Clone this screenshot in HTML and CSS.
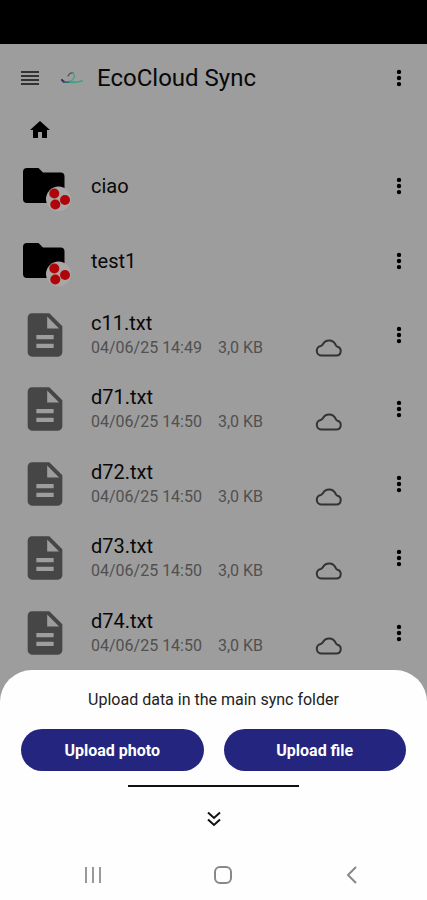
FILE: index.html
```
<!DOCTYPE html>
<html lang="en">
<head>
<meta charset="utf-8">
<meta name="viewport" content="width=device-width, initial-scale=1">
<title>EcoCloud Sync</title>
<link rel="stylesheet" href="styles.css">
</head>
<body>

<!-- shared icons -->
<svg class="defs" width="0" height="0">
  <symbol id="dots" viewBox="0 0 24 24">
    <circle cx="12" cy="5.9" r="2.2"/><circle cx="12" cy="12" r="2.2"/><circle cx="12" cy="18.1" r="2.2"/>
  </symbol>
  <symbol id="folder" viewBox="0 0 52 52">
    <path d="M8 8h11.500l4.500 4.500h17.500a4 4 0 0 1 4 4v22.500a4 4 0 0 1-4 4h-33.500a4 4 0 0 1-4-4v-27a4 4 0 0 1 4-4z"/>
    <circle cx="39.500" cy="39" r="12.500" fill="#a9a6a6"/>
    <g fill="#b00508"><circle cx="35.300" cy="33.500" r="5"/><circle cx="46" cy="40" r="5"/><circle cx="36.300" cy="44.500" r="5"/></g>
  </symbol>
  <symbol id="file" viewBox="0 0 24 24">
    <path d="M14 2H6c-1.100 0-2 .9-2 2v16c0 1.100.9 2 2 2h12c1.100 0 2-.9 2-2V8l-6-6zm2 16H8v-2h8v2zm0-4H8v-2h8v2zm-3-5V3.500L18.500 9H13z"/>
  </symbol>
  <symbol id="cloud" viewBox="0 0 28 20">
    <path d="M7 17.500h14.500a4.500 4.500 0 0 0 1-8.800c-1.500-.4-1.500-1-2-2.200a7 7 0 0 0-12.500-.5c-.6 1.200-1 1.600-2.300 2a4.800 4.800 0 0 0 1.300 9.500z" fill="none" stroke="#333" stroke-width="2"/>
  </symbol>
</svg>

<div class="statusbar"></div>

<header class="toolbar">
  <button class="icon-btn menu" aria-label="Menu">
    <svg width="20" height="16" viewBox="0 0 20 16" fill="none" stroke="#333" stroke-width="2"><path d="M1 2h18M1 6h18M1 10h18M1 14h18"/></svg>
  </button>
  <svg class="logo" width="22" height="14" viewBox="0 0 22 14" fill="none" stroke-linecap="round">
    <path d="M1 9l2 2" stroke="#29305f" stroke-width="2"/>
    <path d="M3 10.500q3 1.500 6 0" stroke="#3d6272" stroke-width="1.500"/>
    <path d="M7 5q2-4 5-3" stroke="#46545c" stroke-width="1.200"/>
    <path d="M12 2q3 3 0 6q-1 2-3 3" stroke="#4b9b8b" stroke-width="1.200"/>
    <path d="M9 11q5 1 12-1" stroke="#3aa284" stroke-width="1.800"/>
  </svg>
  <h1>EcoCloud Sync</h1>
  <button class="icon-btn" aria-label="More options"><svg class="dots"><use href="#dots"/></svg></button>
</header>

<nav class="path">
  <a href="#" aria-label="Home">
    <svg width="24" height="24" viewBox="0 0 24 24"><path d="M10 20v-6h4v6h5v-8h3L12 3 2 12h3v8z"/></svg>
  </a>
</nav>

<ul class="list">
  <li>
    <svg class="type"><use href="#folder"/></svg>
    <div class="info"><div class="name">ciao</div></div>
    <button class="icon-btn" aria-label="Options for ciao"><svg class="dots"><use href="#dots"/></svg></button>
  </li>
  <li>
    <svg class="type"><use href="#folder"/></svg>
    <div class="info"><div class="name">test1</div></div>
    <button class="icon-btn" aria-label="Options for test1"><svg class="dots"><use href="#dots"/></svg></button>
  </li>
  <li>
    <svg class="type file"><use href="#file"/></svg>
    <div class="info">
      <div class="name">c11.txt</div>
      <div class="meta"><span>04/06/25 14:49</span><span>3,0 KB</span></div>
    </div>
    <svg class="cloud"><use href="#cloud"/></svg>
    <button class="icon-btn" aria-label="Options for c11.txt"><svg class="dots"><use href="#dots"/></svg></button>
  </li>
  <li>
    <svg class="type file"><use href="#file"/></svg>
    <div class="info">
      <div class="name">d71.txt</div>
      <div class="meta"><span>04/06/25 14:50</span><span>3,0 KB</span></div>
    </div>
    <svg class="cloud"><use href="#cloud"/></svg>
    <button class="icon-btn" aria-label="Options for d71.txt"><svg class="dots"><use href="#dots"/></svg></button>
  </li>
  <li>
    <svg class="type file"><use href="#file"/></svg>
    <div class="info">
      <div class="name">d72.txt</div>
      <div class="meta"><span>04/06/25 14:50</span><span>3,0 KB</span></div>
    </div>
    <svg class="cloud"><use href="#cloud"/></svg>
    <button class="icon-btn" aria-label="Options for d72.txt"><svg class="dots"><use href="#dots"/></svg></button>
  </li>
  <li>
    <svg class="type file"><use href="#file"/></svg>
    <div class="info">
      <div class="name">d73.txt</div>
      <div class="meta"><span>04/06/25 14:50</span><span>3,0 KB</span></div>
    </div>
    <svg class="cloud"><use href="#cloud"/></svg>
    <button class="icon-btn" aria-label="Options for d73.txt"><svg class="dots"><use href="#dots"/></svg></button>
  </li>
  <li>
    <svg class="type file"><use href="#file"/></svg>
    <div class="info">
      <div class="name">d74.txt</div>
      <div class="meta"><span>04/06/25 14:50</span><span>3,0 KB</span></div>
    </div>
    <svg class="cloud"><use href="#cloud"/></svg>
    <button class="icon-btn" aria-label="Options for d74.txt"><svg class="dots"><use href="#dots"/></svg></button>
  </li>
</ul>

<section class="sheet">
  <p>Upload data in the main sync folder</p>
  <div class="actions">
    <button class="upload">Upload photo</button>
    <button class="upload">Upload file</button>
  </div>
  <hr>
  <button class="icon-btn collapse" aria-label="Close">
    <svg width="14" height="16" viewBox="0 0 14 16" fill="none" stroke="#111" stroke-width="2"><path d="M1 1.500l6 5.500 6-5.500M1 8.500l6 5.500 6-5.500"/></svg>
  </button>
  <div class="navbar">
    <button class="icon-btn" aria-label="Recent apps">
      <svg width="18" height="18" viewBox="0 0 18 18" fill="none" stroke="#999" stroke-width="2"><path d="M2 1v16M9 1v16M16 1v16"/></svg>
    </button>
    <button class="icon-btn" aria-label="Home screen">
      <svg width="18" height="18" viewBox="0 0 18 18" fill="none" stroke="#888" stroke-width="2"><rect x="1" y="1" width="16" height="16" rx="5"/></svg>
    </button>
    <button class="icon-btn" aria-label="Back">
      <svg width="18" height="18" viewBox="0 0 18 18" fill="none" stroke="#888" stroke-width="2"><path d="M13 1L5 9l8 8"/></svg>
    </button>
  </div>
</section>

</body>
</html>
```
FILE: styles.css
```
* {
	box-sizing: border-box;
}

body {
	margin: 0;
	min-height: 100vh;
	display: flex;
	flex-direction: column;
	background: #9d9d9d;
	color: #080808;
	font-family: Roboto, sans-serif;
	font-size: 16px;
}

svg {
	display: block;
	flex: none;
}

.defs {
	display: none;
}

.statusbar {
	height: 44px;
	background: #000;
}

.icon-btn {
	display: flex;
	align-items: center;
	justify-content: center;
	flex: none;
	width: 24px;
	height: 32px;
	padding: 0;
	border: 0;
	background: none;
	color: inherit;
}

.dots {
	width: 24px;
	height: 24px;
}

.toolbar {
	display: flex;
	align-items: center;
	height: 68px;
	padding: 0 16px 0 18px;
}

.logo {
	margin-left: 19px;
}

.toolbar h1 {
	flex: 1;
	margin: 0 0 0 14px;
	font-size: 24px;
	font-weight: 400;
	line-height: 32px;
}

.path {
	height: 37px;
	padding: 6px 28px 0;
}

.path a {
	display: block;
	width: 24px;
	color: #000;
}

.list {
	flex: 1;
	display: flex;
	flex-direction: column;
	margin: 0;
	padding: 0;
	list-style: none;
}

.list li {
	flex: 1;
	display: flex;
	align-items: center;
	min-height: 64px;
	padding: 0 16px 0 19px;
}

.type {
	width: 52px;
	height: 52px;
}

.file {
	fill: #464646;
}

.info {
	flex: 1;
	margin-left: 20px;
}

.name {
	font-size: 20px;
	line-height: 26px;
}

.meta {
	display: flex;
	gap: 16px;
	color: #505050;
	line-height: 24px;
}

.cloud {
	width: 28px;
	height: 20px;
	margin: 26px 44px 0 0;
}

.sheet {
	display: flex;
	flex-direction: column;
	align-items: center;
	padding: 20px 21px 9px;
	border-radius: 32px 32px 0 0;
	background: #fefefe;
}

.sheet p {
	margin: 0;
	color: #222;
	line-height: 20px;
}

.actions {
	display: flex;
	gap: 20px;
	width: 100%;
	margin-top: 19px;
}

.upload {
	flex: 1;
	height: 42px;
	border: 0;
	border-radius: 21px;
	background: #24257f;
	color: #fff;
	font-family: inherit;
	font-size: 16px;
	font-weight: 700;
}

.sheet hr {
	width: 171px;
	height: 2px;
	margin: 14px 0 0;
	border: 0;
	background: #111;
}

.collapse {
	margin-top: 16px;
}

.navbar {
	display: flex;
	justify-content: space-between;
	width: 100%;
	margin-top: 24px;
	padding: 0 42px 0 60px;
}
```
